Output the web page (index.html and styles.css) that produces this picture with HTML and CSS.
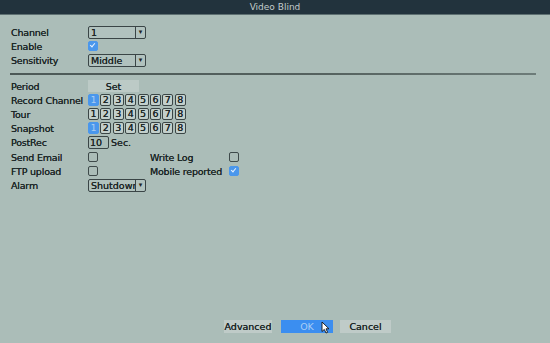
FILE: index.html
```html
<!DOCTYPE html>
<html>
<head>
<meta charset="utf-8">
<link rel="stylesheet" href="styles.css">
</head>
<body>
<div class="window">
  <div class="titlebar">Video Blind</div>
  <div class="content">
    <div class="row first">
      <span class="label">Channel</span>
      <span class="select"><span class="val">1</span><span class="arrow">▾</span></span>
    </div>
    <div class="row">
      <span class="label">Enable</span>
      <span class="check on"></span>
    </div>
    <div class="row">
      <span class="label">Sensitivity</span>
      <span class="select"><span class="val">Middle</span><span class="arrow">▾</span></span>
    </div>
    <div class="sep"></div>
    <div class="row">
      <span class="label">Period</span>
      <span class="btn set">Set</span>
    </div>
    <div class="row">
      <span class="label">Record Channel</span>
      <span class="chans"><span class="ch sel">1</span><span class="ch">2</span><span class="ch">3</span><span class="ch">4</span><span class="ch">5</span><span class="ch">6</span><span class="ch">7</span><span class="ch">8</span></span>
    </div>
    <div class="row">
      <span class="label">Tour</span>
      <span class="chans"><span class="ch">1</span><span class="ch">2</span><span class="ch">3</span><span class="ch">4</span><span class="ch">5</span><span class="ch">6</span><span class="ch">7</span><span class="ch">8</span></span>
    </div>
    <div class="row">
      <span class="label">Snapshot</span>
      <span class="chans"><span class="ch sel">1</span><span class="ch">2</span><span class="ch">3</span><span class="ch">4</span><span class="ch">5</span><span class="ch">6</span><span class="ch">7</span><span class="ch">8</span></span>
    </div>
    <div class="row">
      <span class="label">PostRec</span>
      <span class="input">10</span><span class="unit">Sec.</span>
    </div>
    <div class="row gap1">
      <span class="label">Send Email</span>
      <span class="cell"><span class="check"></span></span>
      <span class="label2">Write Log</span>
      <span class="check"></span>
    </div>
    <div class="row">
      <span class="label">FTP upload</span>
      <span class="cell"><span class="check"></span></span>
      <span class="label2">Mobile reported</span>
      <span class="check on"></span>
    </div>
    <div class="row">
      <span class="label">Alarm</span>
      <span class="select"><span class="val clip">Shutdown</span><span class="arrow">▾</span></span>
    </div>
  </div>
  <div class="footer">
    <span class="btn adv">Advanced</span>
    <span class="btn ok">OK
      <svg class="cursor" width="9" height="13" viewBox="0 0 9 13"><path d="M1 1 L1 10.5 L3.3 8.4 L5 12 L6.6 11.3 L5 7.8 L8 7.8 Z" fill="#fff" stroke="#111" stroke-width="0.9" stroke-linejoin="round"/></svg>
    </span>
    <span class="btn cancel">Cancel</span>
  </div>
</div>
</body>
</html>
```
FILE: styles.css
```css
html, body {
  margin: 0;
  padding: 0;
}
body {
  width: 550px;
  height: 343px;
  background: #abbdb8;
  font-family: "DejaVu Sans", sans-serif;
  font-size: 9.5px;
  color: #1c2626;
  overflow: hidden;
}
.window {
  display: flex;
  flex-direction: column;
  height: 343px;
}
.titlebar {
  height: 14px;
  line-height: 14px;
  background: #22333d;
  border-bottom: 1px solid #5e7072;
  color: #c3cccc;
  text-align: center;
  font-size: 9px;
}
.content {
  padding: 10px 0 0 11px;
  display: flex;
  flex-direction: column;
}
.row {
  height: 14px;
  display: flex;
  align-items: center;
}
.row.gap1 {
  margin-top: 1px;
}
.label {
  width: 77px;
  flex: none;
  white-space: nowrap;
  letter-spacing: -0.2px;
  text-shadow: 0 0 0.4px #1c2626;
}
.label2 {
  width: 79px;
  flex: none;
  white-space: nowrap;
  letter-spacing: -0.2px;
  text-shadow: 0 0 0.4px #1c2626;
}
.cell {
  width: 62px;
  flex: none;
  display: flex;
}
.select {
  width: 56px;
  height: 11px;
  border: 1px solid #3a4546;
  border-radius: 2px;
  display: flex;
  background: #b1c2be;
  box-sizing: content-box;
}
.select .val {
  flex: 1;
  line-height: 11px;
  padding-left: 2px;
  overflow: hidden;
  white-space: nowrap;
  text-shadow: 0 0 0.4px #1c2626;
}
.select .arrow {
  width: 9px;
  border-left: 1px solid #3a4546;
  font-size: 7px;
  line-height: 11px;
  text-align: center;
  color: #222;
}
.check {
  width: 8px;
  height: 8px;
  border: 1px solid #3e4a4a;
  border-radius: 2px;
  flex: none;
}
.check.on {
  background: #4a97ec;
  border-color: #4a97ec;
  position: relative;
}
.check.on::after {
  content: "";
  position: absolute;
  left: 2px;
  top: 0px;
  width: 2px;
  height: 4px;
  border: solid #e8f2ff;
  border-width: 0 1.2px 1.2px 0;
  transform: rotate(40deg);
}
.sep {
  margin: 6px 0 4px -1px;
  width: 526px;
  height: 2px;
  background: linear-gradient(to right, #4c5957 0%, #55625f 60%, #6d7c79 100%);
}
.btn {
  display: inline-flex;
  align-items: center;
  justify-content: center;
  height: 12px;
  background: #bccac6;
  text-shadow: 0 0 0.4px #1c2626;
}
.btn.set {
  width: 51px;
}
.chans {
  display: flex;
  gap: 1.4px;
}
.ch {
  width: 9px;
  height: 10px;
  border: 1px solid #3b4646;
  border-radius: 2px;
  background: #c2cfcb;
  font-size: 9.5px;
  line-height: 10px;
  text-align: center;
  text-shadow: 0 0 0.4px #1c2626;
}
.ch.sel {
  background: #4a97ec;
  border-color: #4a97ec;
  color: #a9cbf2;
  text-shadow: none;
}
.input {
  width: 18px;
  height: 11px;
  border: 1px solid #3a4546;
  border-radius: 2px;
  line-height: 11px;
  padding-left: 1px;
  text-shadow: 0 0 0.4px #1c2626;
}
.unit {
  margin-left: 2px;
  text-shadow: 0 0 0.4px #1c2626;
}
.select .val.clip {
  text-overflow: clip;
}
.footer {
  margin-top: auto;
  margin-bottom: 10px;
  padding-left: 224px;
  display: flex;
}
.btn.adv {
  width: 48px;
  height: 13px;
  margin-right: 9px;
  background: #bfcbc8;
}
.btn.ok {
  width: 52px;
  height: 13px;
  margin-right: 7px;
  background: #3b8ef0;
  color: #a8cdf6;
  text-shadow: none;
  position: relative;
}
.cursor {
  position: absolute;
  left: 40px;
  top: 1px;
}
.btn.cancel {
  width: 51px;
  height: 13px;
  background: #bfcbc8;
}
```
